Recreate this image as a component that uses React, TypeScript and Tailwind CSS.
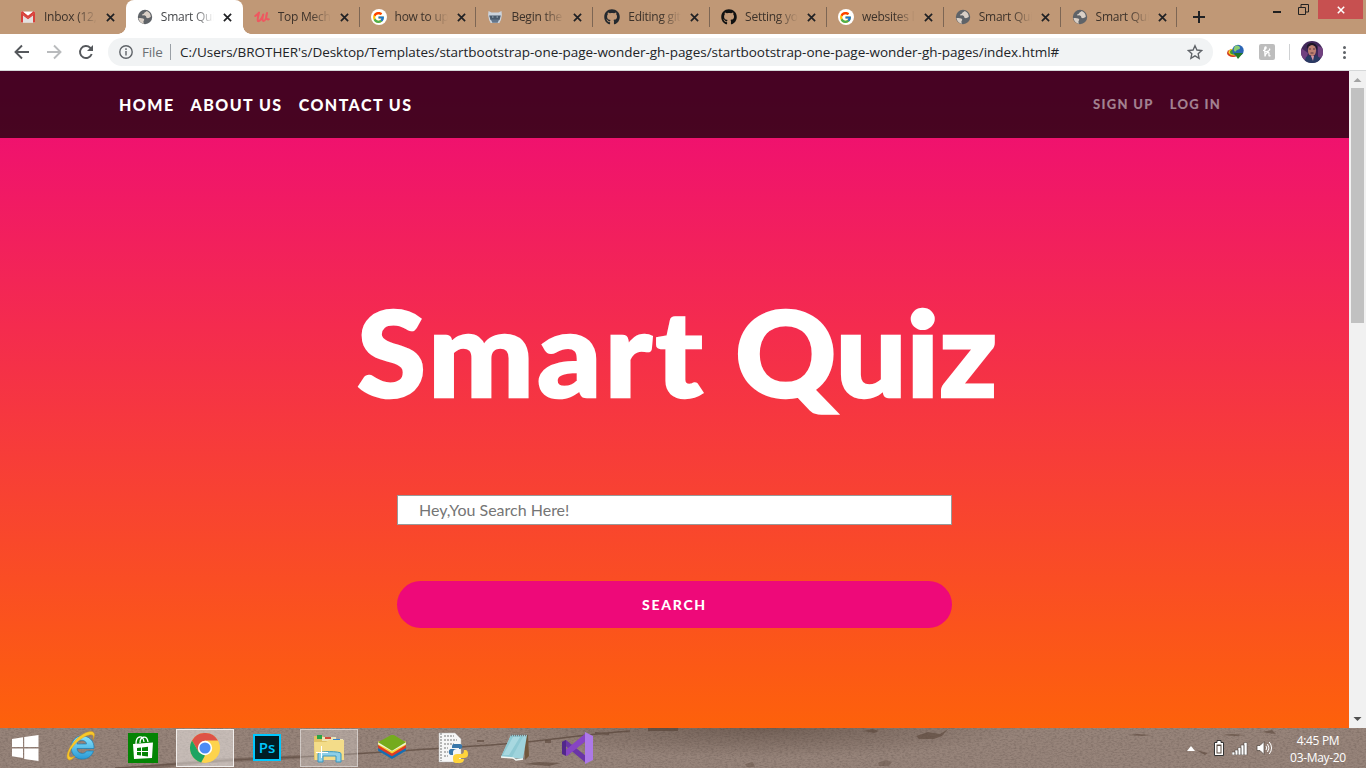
import React from "react";
import { FaGithub } from "react-icons/fa";
import { FcGoogle } from "react-icons/fc";

const ui = "font-['Open_Sans','Noto_Sans',sans-serif]";

function Globe() {
  return (
    <svg viewBox="0 0 16 16" className="size-4">
      <circle cx="8" cy="8" r="7.2" fill="#5f6368" />
      <path d="M1.5 9c2 .2 5-.2 5.6 1.2.5 1.1-.8 1.5-.7 2.6.1 1 .6 1.5.3 1.9C4 14 1.7 12 1.5 9zM9.7 1.9c-.2 1-2.300 1-2.500 2.100C7 5.200 5 4.700 5.200 6c.2 1 2.300.3 3.200.8 1.300.7.3 1.700 1.500 2.200 1.500.5 2.600-.5 3.900-1C13.800 5 12.300 2.800 9.700 1.900z" fill="#d9cfc6" />
    </svg>
  );
}

function Gmail() {
  return (
    <svg viewBox="0 0 16 16" className="size-4">
      <path d="M1 2.500h14v11H1z" fill="#f4f2f2" />
      <path d="M3 13.500V5l5 4 5-4v8.500z" fill="#e3e1e1" />
      <path d="M1 13.500V3.500L8 9l7-5.500v10h-2V6.400L8 10.300 3 6.400v7.100z" fill="#d8403a" />
      <path d="M1 3.800C1 2 3 2 3.600 2.900L8 6.400l4.400-3.500C13 2 15 2 15 3.800L8 9.300z" fill="#d8403a" />
      <path d="M3.600 2.900h8.800L8 6.400z" fill="#fff" />
    </svg>
  );
}

function Udemy() {
  return (
    <svg viewBox="0 0 16 16" className="size-4" fill="none" stroke="#ee5860" strokeLinecap="round" strokeLinejoin="round">
      <path d="M1.300 7C2.500 6 4 5 5 3.500 4.500 6 3 10.500 4 12" strokeWidth="2" />
      <path d="M4 12c1.800 1 4-3 5.300-6.500C8.500 8 7.800 11.500 9.500 12c1.800 0 3-4 3.500-8-1 3-1.500 7 1.800 6.300" strokeWidth="2" />
    </svg>
  );
}

function Raccoon() {
  return (
    <svg viewBox="0 0 16 16" className="size-4">
      <path d="M1.500 2l3 1.500h7L14.500 2l.4 4-1 5-1.500 3H3.600L2.100 11l-1-5z" fill="#cbd3dc" />
      <path d="M2.200 6.500h11.600l-1.300 4.500-4.500 1-4.500-1z" fill="#4a5a6b" />
      <path d="M5 8h1.500M9.500 8H11" stroke="#a9bac8" />
      <path d="M4 10.500h8l-1.300 3.200H5.300z" fill="#63758a" />
    </svg>
  );
}

const Google = () => (
  <span className="flex size-4 items-center justify-center rounded-full bg-white">
    <FcGoogle className="size-[13px]" />
  </span>
);

function Cross({ className = "size-[9px]" }: { className?: string }) {
  return (
    <svg viewBox="0 0 10 10" className={className} stroke="currentColor" strokeWidth="1.900">
      <path d="M1 1l8 8M9 1L1 9" />
    </svg>
  );
}

const tabs = [
  { title: "Inbox (12,4", icon: <Gmail /> },
  { title: "Smart Quiz", icon: <Globe />, active: true },
  { title: "Top Mecha", icon: <Udemy /> },
  { title: "how to upl", icon: <Google /> },
  { title: "Begin the ", icon: <Raccoon /> },
  { title: "Editing git", icon: <FaGithub className="size-4 text-[#24292e]" /> },
  { title: "Setting you", icon: <FaGithub className="size-4 text-[#111]" /> },
  { title: "websites lik", icon: <Google /> },
  { title: "Smart Quiz", icon: <Globe /> },
  { title: "Smart Quiz", icon: <Globe /> },
];

function TabStrip() {
  return (
    <div className="flex h-[34px] bg-[#c09876]">
      <div className="flex w-[1180px] shrink-0 pl-[9px]">
        {tabs.map((t, i) => (
          <div
            key={i}
            className={`relative flex h-full w-[116.850px] shrink-0 items-center pl-[11px] ${t.active ? "rounded-t-lg bg-white" : ""}`}
          >
            {t.active && (
              <>
                <span className="absolute bottom-0 -left-2 size-2 bg-[radial-gradient(circle_at_0_0,transparent_7.500px,white_8px)]" />
                <span className="absolute -right-2 bottom-0 size-2 bg-[radial-gradient(circle_at_100%_0,transparent_7.500px,white_8px)]" />
              </>
            )}
            <span className="shrink-0">{t.icon}</span>
            <span className={`ml-2 w-[53px] overflow-hidden text-[12px] tracking-[-0.250px] whitespace-pre ${t.active ? "text-[#45474a]" : "text-[#3c322a]"} [mask-image:linear-gradient(to_right,black_62%,transparent)]`}>
              {t.title}
            </span>
            <Cross className="ml-[9px] size-[9px] shrink-0 text-[#202124]" />
            {i > 1 && <span className="absolute top-[7px] right-0 h-5 w-px bg-[#7d6654]" />}
          </div>
        ))}
      </div>
      <div className="flex w-[46px] items-center pl-[13px]">
        <svg viewBox="0 0 12 12" className="size-3" stroke="#202124" strokeWidth="2"><path d="M6 0v12M0 6h12" /></svg>
      </div>
      <div className="flex flex-1 items-start justify-end pr-[3px]">
        <span className="mt-[11px] mr-[17px] h-[2px] w-2 bg-[#202020]" />
        <svg viewBox="0 0 11 11" className="mt-1 mr-[9px] size-[11px]" fill="none" stroke="#222">
          <path d="M.5 3.500h7v7h-7zM3 3V.500h7.500V8H8" />
        </svg>
        <div className="flex h-[19px] w-[45px] items-center justify-center bg-[#c75050] text-white">
          <Cross className="size-2" />
        </div>
      </div>
    </div>
  );
}

function AddressBar() {
  return (
    <div className="flex h-[37px] items-center border-b border-[#d6d8d9] bg-white pl-[14px]">
      <svg viewBox="0 0 16 16" className="size-4" fill="none" stroke="#55585c" strokeWidth="1.900"><path d="M15 8H2M8 1.500 1.500 8 8 14.500" /></svg>
      <svg viewBox="0 0 16 16" className="ml-4 size-4" fill="none" stroke="#b9bbbd" strokeWidth="1.900"><path d="M1 8h13M8 1.500 14.500 8 8 14.500" /></svg>
      <svg viewBox="0 0 16 16" className="ml-4 size-4" fill="none" stroke="#55585c" strokeWidth="1.900">
        <path d="M13.700 10a6 6 0 1 1-1.500-6.300L14 5.500" /><path d="M15 1v6H9z" fill="#55585c" stroke="none" />
      </svg>
      <div className="ml-[14px] flex h-7 w-[1105px] items-center rounded-full bg-[#f1f3f4] pl-[11px]">
        <svg viewBox="0 0 14 14" className="size-[14px]" fill="none" stroke="#5f6368" strokeWidth="1.400"><circle cx="7" cy="7" r="6.200" /><path d="M7 6v4.500M7 3.300v1.600" /></svg>
        <span className="ml-[9px] w-[21px] text-[13.500px] tracking-[-0.200px] text-[#6b6f73]">File</span>
        <span className="ml-[7px] h-4 w-px bg-[#9aa0a6]" />
        <span className="ml-[9px] flex w-[1005px]">
          <span className="text-[13.500px] tracking-[-0.026px] whitespace-nowrap text-[#222427]">
            C:/Users/BROTHER's/Desktop/Templates/startbootstrap-one-page-wonder-gh-pages/startbootstrap-one-page-wonder-gh-pages/index.html#
          </span>
        </span>
        <svg viewBox="0 0 24 24" className="ml-[2px] size-4 shrink-0" fill="none" stroke="#5f6368" strokeWidth="2"><path d="m12 2.500 2.900 6.500 7.100.7-5.300 4.800 1.500 7L12 17.800l-6.200 3.700 1.500-7L2 9.700 9.100 9z" /></svg>
      </div>
      <svg viewBox="0 0 18 16" className="ml-[14px] h-4 w-[18px]">
        <ellipse cx="6" cy="9" rx="6" ry="4" fill="#d33c20" /><ellipse cx="6.500" cy="8.200" rx="5" ry="3.400" fill="#f1d42b" /><ellipse cx="7" cy="8" rx="4" ry="2.600" fill="#3f9a30" />
        <circle cx="11" cy="6.500" r="5.700" fill="#2c65b5" /><path d="M8 2c3-1 5 0 5 2s-3 1-4 3-3-1-2-3z" fill="#8bcd72" /><path d="M7 9h9l-5 6z" fill="#257b25" />
      </svg>
      <div className="ml-[14px] flex size-4 items-center justify-center rounded-[2px] bg-[#bdbdbd]">
        <svg viewBox="0 0 12 12" className="size-3" fill="none" stroke="#fff" strokeWidth="1.300"><path d="M2 4.500C4.500 4.500 6 1 4.500 1S4 5 4 10.500C4.500 7 8 5 8 7.500s-.7 2.700 1.500 2.200M4 5.500C7 6 9.500 4 8.500 2.500" /></svg>
      </div>
      <span className="ml-[14px] h-4 w-px bg-[#cfd1d3]" />
      <svg viewBox="0 0 22 22" className="ml-[11px] size-[22px]">
        <defs><clipPath id="avatar"><circle cx="11" cy="11" r="11" /></clipPath></defs>
        <g clipPath="url(#avatar)">
          <path d="M0 0h22v22H0z" fill="#41285a" /><path d="M0 7l7 5-3 10H0zM17 5l5 2v9l-5 1z" fill="#714180" />
          <path d="M6 8C4 0 18 0 16 9l-2-4H8z" fill="#1e1727" /><ellipse cx="11" cy="9.500" rx="4" ry="5.500" fill="#bd8071" />
          <path d="M8 8h2M12 8h2M9.500 12h3" stroke="#593441" /><path d="M3 22l2-6 4-2 3 2 3-2 4 3v5z" fill="#293a63" /><path d="M10 15h3l-1 5z" fill="#d695a7" />
        </g>
      </svg>
      <div className="ml-[20px] flex flex-col gap-[2px]">
        <i className="size-[3px] rounded-full bg-[#5f6368]" /><i className="size-[3px] rounded-full bg-[#5f6368]" /><i className="size-[3px] rounded-full bg-[#5f6368]" />
      </div>
    </div>
  );
}

function Page() {
  return (
    <div className="flex h-[657px]">
      <main className="flex w-[1349px] flex-col bg-[linear-gradient(to_bottom,#ee0979_0,#ff6a00_723px)] font-[Lato,sans-serif]">
        <nav className="flex h-[67px] items-center bg-black/70 pr-[128px] pl-[119px] font-black text-white">
          <div className="flex gap-4 pt-px text-[16px] tracking-[1.450px]">
            <a>HOME</a><a>ABOUT US</a><a>CONTACT US</a>
          </div>
          <div className="ml-auto flex gap-4 text-[13px] tracking-[1.300px] text-white/50">
            <a>SIGN UP</a><a>LOG IN</a>
          </div>
        </nav>
        <h1 className="mt-[139px] flex h-[150px] items-center pl-[357px] text-[118px] leading-none font-black whitespace-pre text-white [-webkit-text-stroke:2.500px_white]">
          <span className="w-[378px] origin-left scale-x-106 tracking-[3.300px]">Smart </span>
          <span className="origin-left scale-x-106">Quiz</span>
        </h1>
        <div className="mt-[68px] ml-[397px] flex h-[30px] w-[555px] items-center border border-[#999] bg-white pl-[21px] text-[16px] text-[#757575]">
          Hey,You Search Here!
        </div>
        <button className="mt-[56px] ml-[397px] h-[47px] w-[555px] rounded-full bg-[#ee0979] text-[14px] font-black tracking-[1.700px] text-white">SEARCH</button>
      </main>
      <div className="flex w-[17px] flex-col items-center bg-[#f1f1f1]">
        <svg viewBox="0 0 17 17" className="size-[17px]"><path d="M4.500 11 8.500 7l4 4z" fill="#a3a3a3" /></svg>
        <div className="h-[235px] w-[13px] bg-[#c1c1c1]" />
        <svg viewBox="0 0 17 17" className="mt-auto size-[17px]"><path d="M4.500 6 8.500 10l4-4z" fill="#505050" /></svg>
      </div>
    </div>
  );
}

function Wood() {
  return (
    <svg className="absolute inset-0 h-10 w-full" viewBox="0 0 1366 40" preserveAspectRatio="none">
      <defs>
        <filter id="grain" x="0" y="0" width="100%" height="100%">
          <feTurbulence type="fractalNoise" baseFrequency=".35 .7" numOctaves="3" seed="4" />
          <feColorMatrix values="0 0 0 0 .18  0 0 0 0 .13  0 0 0 0 .11  1.3 0 0 0 -.5" />
        </filter>
        <radialGradient id="shade" cx=".5" cy="0" r=".5" gradientTransform="scale(1 2)"><stop stopColor="#3c2b22" stopOpacity=".4" /><stop offset="1" stopColor="#3c2b22" stopOpacity="0" /></radialGradient>
      </defs>
      <path d="M0 0h1366v40H0z" fill="#97847a" />
      <path d="M0 0h1366v40H0z" filter="url(#grain)" />
      <path d="M500 0h520v30H500z" fill="url(#shade)" />
      <g fill="none" stroke="#59463b" opacity=".7">
        <path d="M115 40c70-4 95-8 185-11 50-2 125-8 175-11 60-3 90-10 155-15" strokeWidth="1.500" />
        <path d="M140 40l70-7 90-4" strokeWidth="4" opacity=".5" />
        <path d="M648 1.500h30" strokeWidth="3" />
        <path d="M595 5l14 1" strokeWidth="2" />
      </g>
      <g fill="#594539" opacity=".6">
        <path d="M523 36l16-2 22 1-12 3zM477 12h7v2h-7zM545 12h6v3h-6zM863 3l10-2 6 2-5 2zM916 8l12-4 12 2 8-5-6 7-8 3-15 0zM1129 7l8-1 14 1-9 1zM1222 7l10-1 12 1-9 1zM1262 4l10-2 4 4-8-1zM1196 22l12 3-3 2z" />
        <path d="M878 35l8-3 6 2-3 4h-10zM745 36l8-2 2 5h-8z" opacity=".6" />
      </g>
    </svg>
  );
}

function Taskbar() {
  return (
    <div className="relative h-10 overflow-hidden">
      <Wood />
      <div className="relative flex h-10 items-center text-white">
        <svg viewBox="0 0 28 28" className="ml-[11px] size-7 shrink-0" fill="#fff"><path d="M1 5l11-1.700V13H1zM13.200 3.100 27.500 1v12H13.200zM1 14.500h11v9.400L1 22.300zM13.200 14.500h14.300V27l-14.300-2.100z" /></svg>
        <svg viewBox="0 0 32 32" className="mb-1 ml-[26px] size-8 shrink-0">
          <defs><linearGradient id="ie" x2="0" y2="1"><stop stopColor="#8be4fc" /><stop offset="1" stopColor="#2a9ad6" /></linearGradient></defs>
          <path d="M29 18.500H12c.3 5.500 7.500 6.500 9.500 2.500h7c-2 6-7 8.500-12.500 8C4.500 28.500 2 9.500 15 6c9-1 14.500 5 14 12.500zM12 14h9.500c-.5-5-9-5-9.500 0z" fill="url(#ie)" stroke="#1a80b6" strokeWidth=".7" />
          <path d="M4 30C-3 27 10 4 25 1.500c5-.5 5.500 3.500 3 8 1-4.500 0-5.500-4-4.500C13 8 2 22 4.500 26.500c1 1.300 3 1 5.500-.5-2.500 3-4 4-6 4z" fill="#f9c82b" stroke="#d39a13" strokeWidth=".4" />
        </svg>
        <svg viewBox="0 0 30 30" className="ml-[31px] size-[30px] shrink-0"><path d="M0 0h30v30H0z" fill="#048404" /><path d="M5 11l20-1.500-1 15.500-18 1z" fill="#fff" /><path d="M8 11c0-9 7-9 8-2M12 10c0-7 7-8 8-1" fill="none" stroke="#fff" strokeWidth="1.300" /><path d="M9 15l4-.5V18H9zM14 14.400l6-.7V18h-6zM9 19h4v3.500L9 22zM14 19h6v4.500l-6-.7z" fill="#048404" /></svg>
        <div className="ml-[18px] flex h-[38px] w-[58px] shrink-0 items-center justify-center border border-[#f1eeec] bg-white/45">
          <svg viewBox="0 0 30 30" className="size-[30px]"><circle cx="15" cy="15" r="15" fill="#fdd34d" /><path d="M2 7.500A15 15 0 0 1 28 7.500H15L8.500 18.800z" fill="#de5246" /><path d="M2 7.500 8.700 19 15 22.500l-3.800 7A15 15 0 0 1 2 7.500z" fill="#1da462" /><circle cx="15" cy="15" r="7.200" fill="#fff" /><circle cx="15" cy="15" r="5.600" fill="#4c8bf5" /></svg>
        </div>
        <div className="mb-[2px] ml-[19px] flex h-[27px] w-[28px] shrink-0 items-center justify-center border-2 border-[#00c8ff] bg-[#001d26] text-[15px] font-semibold text-[#00c8ff]">Ps</div>
        <div className="ml-[19px] flex h-[38px] w-[58px] shrink-0 items-center justify-center border border-white/45 bg-white/25">
          <svg viewBox="0 0 32 32" className="size-8">
            <path d="M1 4h9l2 2h10v22H1z" fill="#dfc165" /><path d="M4 3h5v4H4z" fill="#29a447" /><path d="M9 5h14v4H9z" fill="#eee4b4" /><path d="M12 5h6v2h-6z" fill="#d44a38" /><path d="M17 7h13v5H17z" fill="#eee4b4" /><path d="M20 7h7v3h-7z" fill="#3784ce" />
            <path d="M1 10h12l3-2h15v20H2z" fill="#f3dc89" /><path d="M5 30V21.500c0-2.500 23-2.500 23 0V30h-5v-6H10v6z" fill="#8dcfe7" stroke="#3897be" /><path d="M8.500 14v12M3 20.500h12" stroke="#fff" />
          </svg>
        </div>
        <svg viewBox="0 0 30 27" className="mb-1 ml-[19px] h-[25px] w-[30px] shrink-0"><path d="M0 18l15 9 15-9v-6H0z" fill="#166fb3" /><path d="M0 15l15 9 15-9v-5H0z" fill="#df3b23" /><path d="M0 12l15 9 15-9V8H0z" fill="#f8d633" /><path d="M0 9v2l15 8 15-8V9z" fill="#edf2d5" /><path d="M0 9 14 1h3l13 8-15 9z" fill="#74ab1e" /></svg>
        <svg viewBox="0 0 31 32" className="ml-[31px] h-8 w-[31px] shrink-0">
          <path d="M1 1h16l6 6v23H1z" fill="#f6f6f6" stroke="#bbb" strokeWidth=".5" /><path d="M3 1v28M6 4h10M6 8h13M6 12h10M6 16h4M6 20h4M6 24h4" stroke="#777" strokeDasharray="2 1" />
          <path d="M20 12h-4c-2 0-2 2-2 4h7v1h-8c-3 0-3 6 0 6h2v-3c0-2 2-3 4-3h3c3 0 3-5 0-5z" fill="#3977aa" />
          <path d="M21 31h-3c-3 0-3-3-3-6 0-2 2-3 4-3h4c2 0 3-1 3-4 4 0 4 2 4 5 0 2-2 3-4 3h-5v1h5c0 3-2 4-5 4z" fill="#ffd43b" />
        </svg>
        <svg viewBox="0 0 30 30" className="mb-[2px] ml-[31px] size-[30px] shrink-0"><path d="M24 3h4l1 21-4 4z" fill="#71573d" /><path d="M11 3h16l-4 24-22-2z" fill="#9fd3dc" /><path d="M11 3h13L12 25H1z" fill="#8ec9d3" /><path d="M13 5h7L9 23H3z" fill="#b9e3e9" opacity=".6" /><path d="M1 25l12 1 3 2 7-1" fill="none" stroke="#f2f7f4" strokeWidth="1.500" /><path d="M11 3h16" stroke="#777" strokeWidth="2.500" strokeDasharray="1 1" /></svg>
        <svg viewBox="0 0 32 32" className="ml-[31px] size-8 shrink-0"><path d="M1 10l4-2 20 16v7L1 11z" fill="#6a35a6" /><path d="M1 21l5 3L25 9V1L1 21z" fill="#8744c4" /><path d="M1 10l4-2v16l-4-2z" fill="#52278b" /><path d="M24 0l8 4v24l-8 4z" fill="#ad79e8" /></svg>
        <div className="ml-auto flex items-center">
          <svg viewBox="0 0 8 5" className="h-[5px] w-2"><path d="M0 5l4-5 4 5z" fill="#fff" /></svg>
          <svg viewBox="0 0 10 16" className="ml-[19px] h-4 w-[10px]"><path d="M3 .5h4v2h2.500v13h-9v-13H3z" fill="#fff" stroke="#333" /><path d="M2.500 4.500h5v9h-5z" fill="#5a4d43" /><path d="M3.500 6h3v6.500h-3z" fill="#fff" /></svg>
          <svg viewBox="0 0 16 13" className="ml-2 h-[13px] w-4" fill="#fff" stroke="#403a35" strokeWidth=".5"><path d="M0 10h3v3H0zM3 8h3v5H3zM6 5.500h3V13H6zM9 3h3v10H9zM12 .5h3V13h-3z" /></svg>
          <svg viewBox="0 0 16 16" className="ml-2 size-4" fill="none" stroke="#fff"><path d="M1 5.500h3L8 1.500v13l-4-4H1z" fill="#fff" stroke="#4b413a" strokeWidth=".7" /><path d="M10 6q1.500 2 0 4M11.500 4q3 4 0 8M13.300 2q4.500 6 0 12" /></svg>
          <div className="mr-[17px] ml-[15px] flex w-[62px] flex-col items-center pt-px text-[12px] leading-[17px] tracking-[-0.320px] whitespace-nowrap"><span>4:45 PM</span><span>03-May-20</span></div>
        </div>
      </div>
    </div>
  );
}

export default function App() {
  return (
    <div className={`flex h-[768px] w-[1366px] flex-col overflow-hidden ${ui}`}>
      <TabStrip />
      <AddressBar />
      <Page />
      <Taskbar />
    </div>
  );
}
